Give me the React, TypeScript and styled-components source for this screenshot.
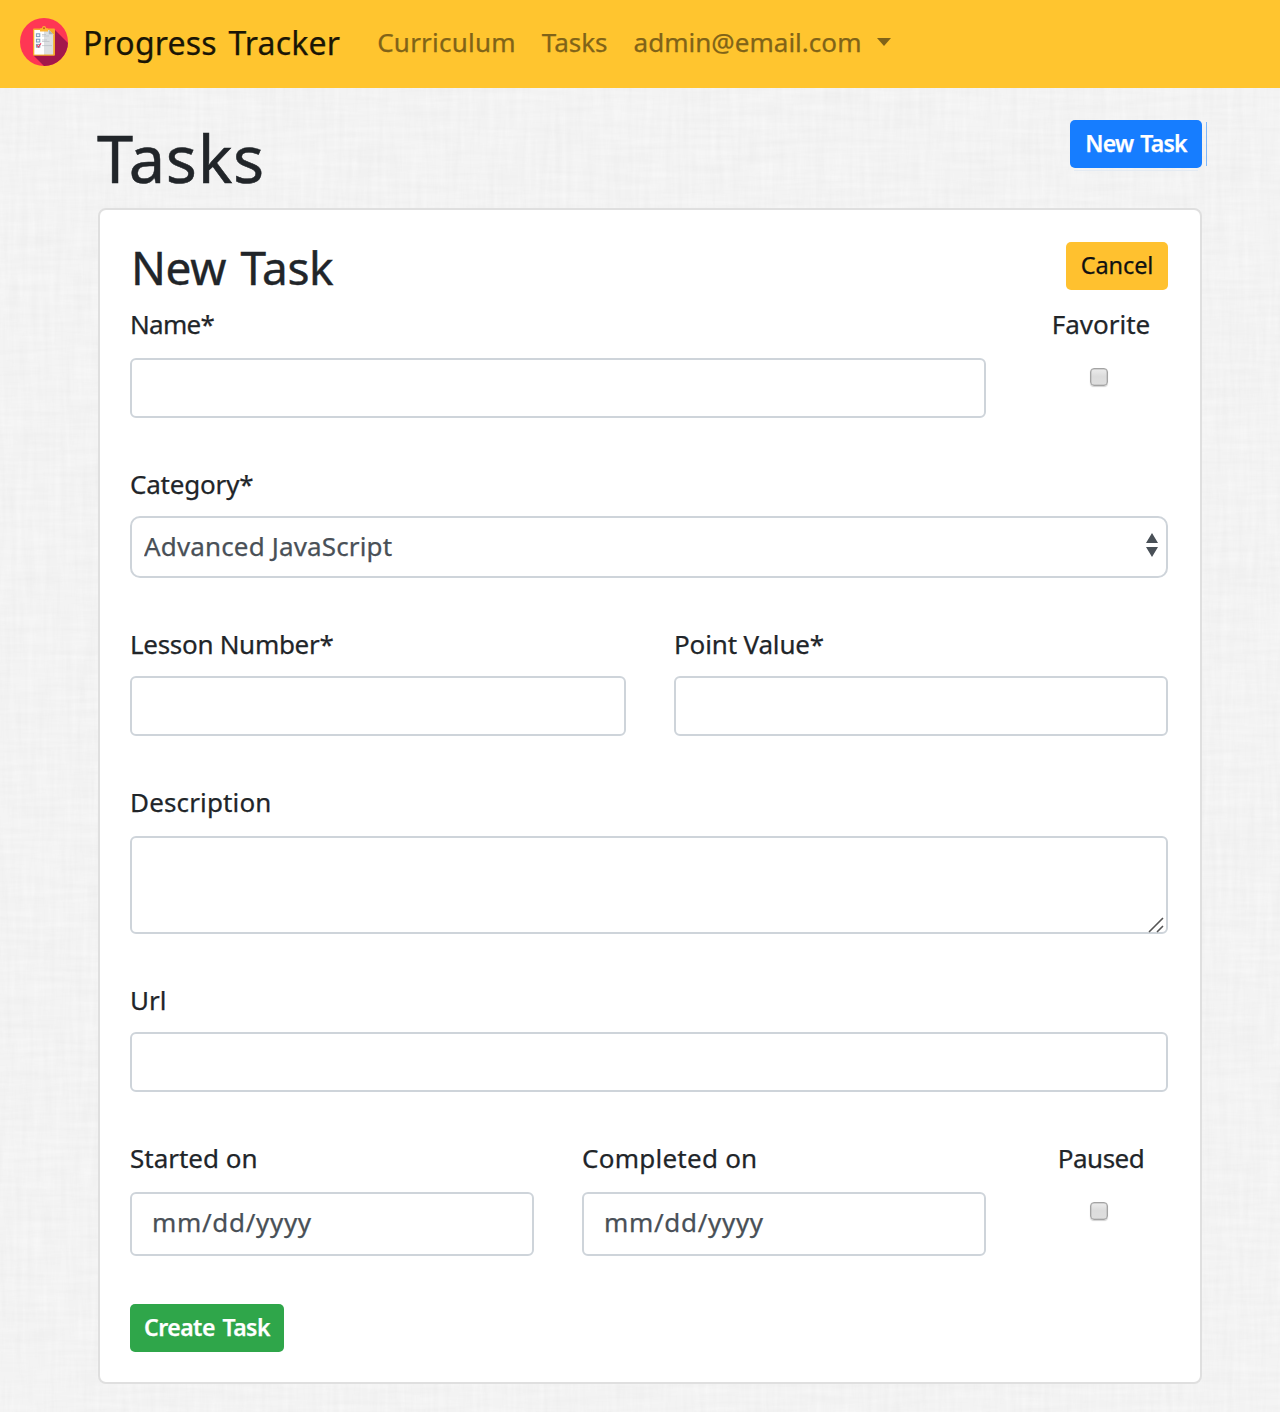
import React from 'react';
import styled, { createGlobalStyle } from 'styled-components';

const GlobalStyle = createGlobalStyle`
  *, *::before, *::after { box-sizing: border-box; }
  body {
    margin: 0;
    background: #f3f3f3;
    color: #212529;
    font-family: "Noto Sans", "Open Sans", sans-serif;
    font-size: 26px;
    -webkit-text-stroke: 0.25px;
  }
  input, select, textarea, button { font-family: inherit; }
`;

const Page = styled.div`
  position: relative;
  isolation: isolate;
  height: 1412px;
  overflow: hidden;
`;

const Linen = styled.svg`
  position: absolute;
  inset: 0;
  width: 100%;
  height: 100%;
  z-index: -1;
`;

const Navbar = styled.nav`
  display: flex;
  align-items: center;
  height: 88px;
  padding: 0 20px 4px;
  background: #ffc52f;
`;

const Logo = styled.svg`
  width: 48px;
  height: 48px;
  flex: none;
`;

const Brand = styled.a<{ $track?: number }>`
  margin: 1px 0 0 15px;
  font-size: 32px;
  line-height: 48px;
  white-space: nowrap;
  letter-spacing: ${(p) => p.$track ?? 0}px;
  word-spacing: 3px;
  color: #1a1505;
`;

const NavLinks = styled.div`
  display: flex;
  align-items: center;
  margin-left: 37px;
  gap: 26px;
`;

const NavLink = styled.a<{ $track?: number }>`
  display: flex;
  align-items: center;
  font-size: 26px;
  line-height: 40px;
  white-space: nowrap;
  letter-spacing: ${(p) => p.$track ?? 0}px;
  color: #806318;
`;

const Caret = styled.span`
  margin-left: 16px;
  border: 7px solid transparent;
  border-top: 8px solid #806318;
  border-bottom: 0;
`;

const Container = styled.main`
  display: flex;
  flex-direction: column;
  padding: 32px 78px 0 98px;
`;

const Header = styled.header`
  display: flex;
  justify-content: space-between;
  align-items: flex-start;
  height: 88px;
`;

const PageTitle = styled.h1`
  margin: 0 0 0 -1px;
  font-size: 65px;
  font-weight: 400;
  line-height: 76px;
  letter-spacing: 0.7px;
  -webkit-text-stroke: 0.5px;
`;

const tones = {
  primary: { bg: '#167dff', fg: '#fff' },
  warning: { bg: '#ffc12f', fg: '#111' },
  success: { bg: '#2fa64a', fg: '#fff' },
};

const Button = styled.button<{ $tone: keyof typeof tones; $width: number; $track?: number }>`
  position: relative;
  flex: none;
  width: ${(p) => p.$width}px;
  height: 48px;
  padding: 0 0 2px;
  border: 0;
  border-radius: 5px;
  background: ${(p) => tones[p.$tone].bg};
  color: ${(p) => tones[p.$tone].fg};
  font-size: ${(p) => (p.$tone === 'warning' ? 23.5 : 23)}px;
  font-weight: ${(p) => (p.$tone === 'warning' ? 400 : 600)};
  line-height: 46px;
  white-space: nowrap;
  letter-spacing: ${(p) => p.$track ?? 0}px;
  word-spacing: 2px;
`;

const NewTaskButton = styled(Button)`
  &::before {
    content: '';
    position: absolute;
    left: 136px;
    top: 2px;
    width: 1px;
    height: 44px;
    background: #80b8fa;
  }
  &::after {
    content: '';
    position: absolute;
    left: 4px;
    right: 4px;
    top: 50px;
    height: 1px;
    background: #e4ebf3;
  }
`;

const Toolbar = styled.div`
  display: flex;
`;

const Card = styled.section`
  width: 1104px;
  height: 1176px;
  padding: 32px 32px 30px 30px;
  border: 2px solid #dfdfdf;
  border-radius: 8px;
  background: #fff;
`;

const CardHeader = styled.div`
  display: flex;
  justify-content: space-between;
  height: 62px;
`;

const CardTitle = styled.h2`
  margin: 1px 0 0 1px;
  font-size: 46px;
  font-weight: 400;
  line-height: 48px;
  letter-spacing: -0.4px;
  word-spacing: 3px;
  -webkit-text-stroke: 0.4px;
`;

const Form = styled.form`
  display: flex;
  flex-direction: column;
  gap: 46px;
`;

const Row = styled.div<{ $cols: string }>`
  display: grid;
  grid-template-columns: ${(p) => p.$cols};
  column-gap: 48px;
`;

const Field = styled.div<{ $center?: boolean }>`
  display: flex;
  flex-direction: column;
  align-items: ${(p) => (p.$center ? 'center' : 'stretch')};
`;

const Label = styled.label<{ $gap?: number; $track?: number }>`
  margin-bottom: ${(p) => p.$gap ?? 12}px;
  font-size: 26px;
  line-height: 40px;
  white-space: nowrap;
  letter-spacing: ${(p) => p.$track ?? 0}px;
`;

const Input = styled.input<{ $height?: number; $track?: number }>`
  width: 100%;
  height: ${(p) => p.$height ?? 60}px;
  padding: 0 20px 4px;
  border: 2px solid #ced4da;
  border-radius: 6px;
  background: #fff;
  font-size: 26px;
  letter-spacing: ${(p) => p.$track ?? 0}px;
  color: #495057;
  outline: 0;
  &::placeholder {
    color: #495057;
    opacity: 1;
  }
`;

const SelectBox = styled.div`
  position: relative;
  height: 62px;
`;

const Select = styled.select`
  appearance: none;
  width: 100%;
  height: 62px;
  padding: 0 12px 2px;
  border: 2px solid #ced4da;
  border-radius: 10px;
  background: #fff;
  color: #495057;
  font-size: 26px;
  letter-spacing: 0.15px;
  outline: 0;
`;

const SelectArrows = styled.svg`
  position: absolute;
  right: 10.5px;
  top: 17px;
  width: 12px;
  height: 24px;
  pointer-events: none;
`;

const AreaBox = styled.div`
  position: relative;
  height: 98px;
`;

const TextArea = styled.textarea`
  display: block;
  width: 100%;
  height: 98px;
  padding: 12px 20px;
  border: 2px solid #ced4da;
  border-radius: 6px;
  background: #fff;
  font-size: 26px;
  resize: none;
  outline: 0;
`;

const Grip = styled.svg`
  position: absolute;
  right: 4.5px;
  bottom: 1.5px;
  width: 16px;
  height: 16px;
  pointer-events: none;
`;

const Checkbox = styled.input.attrs({ type: 'checkbox' })`
  appearance: none;
  width: 18px;
  height: 18px;
  margin: 10px 5px 0 0;
  border: 1px solid #a3a3a3;
  border-radius: 4px;
  background: linear-gradient(#ececec, #dcdcdc 45%, #dedede);
  box-shadow: 0 1px 1px rgba(0, 0, 0, 0.18), inset 0 0 0 0.5px #b5b5b5;
`;

const Actions = styled.div`
  display: flex;
  margin-top: 2px;
`;

function LogoMark() {
  return (
    <Logo viewBox="0 0 48 48">
      <defs>
        <clipPath id="disc">
          <circle cx="24" cy="24" r="24" />
        </clipPath>
      </defs>
      <g clipPath="url(#disc)">
        <rect width="48" height="48" fill="#ff3654" />
        <path d="M34.5 11.5 L56 33 V56 H32 L13.5 37.5 Z" fill="#a3174b" />
      </g>
      <rect x="13" y="10.5" width="22" height="27.3" rx="1" fill="#f5ac2b" />
      <path d="M14.3 12 H24 V36.6 H14.3 Z" fill="#fff" />
      <path d="M24 12 H29 L33.2 16.2 V36.6 H24 Z" fill="#dcdfe2" />
      <path d="M28.8 12 V16.2 H33.2 Z" fill="#a9b3ba" />
      <path d="M20 13.6 V11 Q20 10.3 21 10.3 H22 Q22 8 24 8 Q26 8 26 10.3 H27 Q28 10.3 28 11 V13.6 Z" fill="#fdb62f" />
      <circle cx="24" cy="10.3" r="1" fill="#bd5b2a" />
      <g fill="#eef4fa" stroke="#7d9dbd" strokeWidth="1">
        <rect x="16.4" y="15.8" width="3.4" height="2.8" />
        <rect x="16.4" y="21.2" width="3.4" height="2.8" />
        <rect x="16.4" y="26.4" width="3.4" height="2.8" />
      </g>
      <path d="M16.8 27 L18.4 29 L21 25.2" fill="none" stroke="#e83a5f" strokeWidth="1.1" />
      <path d="M22 16.5 H26 M22 18 H29 M22 22 H27 M22 23.5 H29.5 M22 27.6 H32" stroke="#b9bec4" strokeWidth=".7" />
    </Logo>
  );
}

function Background() {
  return (
    <Linen aria-hidden="true">
      <filter id="warp" x="0" y="0" width="100%" height="100%" colorInterpolationFilters="sRGB">
        <feTurbulence type="fractalNoise" baseFrequency="0.18 0.015" numOctaves="3" seed="4" />
        <feColorMatrix values="0 0 0 0 0.5  0 0 0 0 0.5  0 0 0 0 0.5  0.06 0 0 0 -0.012" />
      </filter>
      <filter id="weft" x="0" y="0" width="100%" height="100%" colorInterpolationFilters="sRGB">
        <feTurbulence type="fractalNoise" baseFrequency="0.015 0.18" numOctaves="3" seed="9" />
        <feColorMatrix values="0 0 0 0 0.5  0 0 0 0 0.5  0 0 0 0 0.5  0.06 0 0 0 -0.012" />
      </filter>
      <rect width="100%" height="100%" fill="#f7f7f7" />
      <rect width="100%" height="100%" filter="url(#warp)" />
      <rect width="100%" height="100%" filter="url(#weft)" />
    </Linen>
  );
}

export default function App() {
  return (
    <Page>
      <GlobalStyle />
      <Background />
      <Navbar>
        <LogoMark />
        <Brand $track={0.2}>Progress Tracker</Brand>
        <NavLinks>
          <NavLink $track={0.22}>Curriculum</NavLink>
          <NavLink $track={0}>Tasks</NavLink>
          <NavLink $track={0.03}>
            admin@email.com
            <Caret />
          </NavLink>
        </NavLinks>
      </Navbar>
      <Container>
        <Header>
          <PageTitle>Tasks</PageTitle>
          <Toolbar>
            <NewTaskButton $tone="primary" $width={132} $track={-0.8}>New Task</NewTaskButton>
          </Toolbar>
        </Header>
        <Card>
          <CardHeader>
            <CardTitle>New Task</CardTitle>
            <Button $tone="warning" $width={102} $track={-0.1}>Cancel</Button>
          </CardHeader>
          <Form onSubmit={(e) => e.preventDefault()}>
            <Row $cols="856px 134px">
              <Field>
                <Label $gap={14} $track={-0.7}>Name*</Label>
                <Input />
              </Field>
              <Field $center>
                <Label $gap={14}>Favorite</Label>
                <Checkbox />
              </Field>
            </Row>
            <Field>
              <Label $track={-0.2}>Category*</Label>
              <SelectBox>
                <Select>
                  <option>Advanced JavaScript</option>
                </Select>
                <SelectArrows viewBox="0 0 12 24">
                  <path d="M6 0 L12 10 H0 Z M0 14 H12 L6 24 Z" fill="#495057" />
                </SelectArrows>
              </SelectBox>
            </Field>
            <Row $cols="496px 494px">
              <Field>
                <Label $track={-0.3}>Lesson Number*</Label>
                <Input />
              </Field>
              <Field>
                <Label $track={-0.15}>Point Value*</Label>
                <Input />
              </Field>
            </Row>
            <Field>
              <Label $gap={14} $track={0.15}>Description</Label>
              <AreaBox>
                <TextArea />
                <Grip viewBox="0 0 16 16">
                  <path d="M1 15 L15 1 M9 15 L15 9" stroke="#555" strokeWidth="1.6" />
                </Grip>
              </AreaBox>
            </Field>
            <Field>
              <Label>Url</Label>
              <Input />
            </Field>
            <Row $cols="404px 404px 134px">
              <Field>
                <Label $gap={14}>Started on</Label>
                <Input $height={64} $track={0.68} placeholder="mm/dd/yyyy" />
              </Field>
              <Field>
                <Label $gap={14} $track={0.25}>Completed on</Label>
                <Input $height={64} $track={0.68} placeholder="mm/dd/yyyy" />
              </Field>
              <Field $center>
                <Label $gap={14} $track={-0.5}>Paused</Label>
                <Checkbox />
              </Field>
            </Row>
            <Actions>
              <Button $tone="success" $width={154} $track={-0.5}>Create Task</Button>
            </Actions>
          </Form>
        </Card>
      </Container>
    </Page>
  );
}
